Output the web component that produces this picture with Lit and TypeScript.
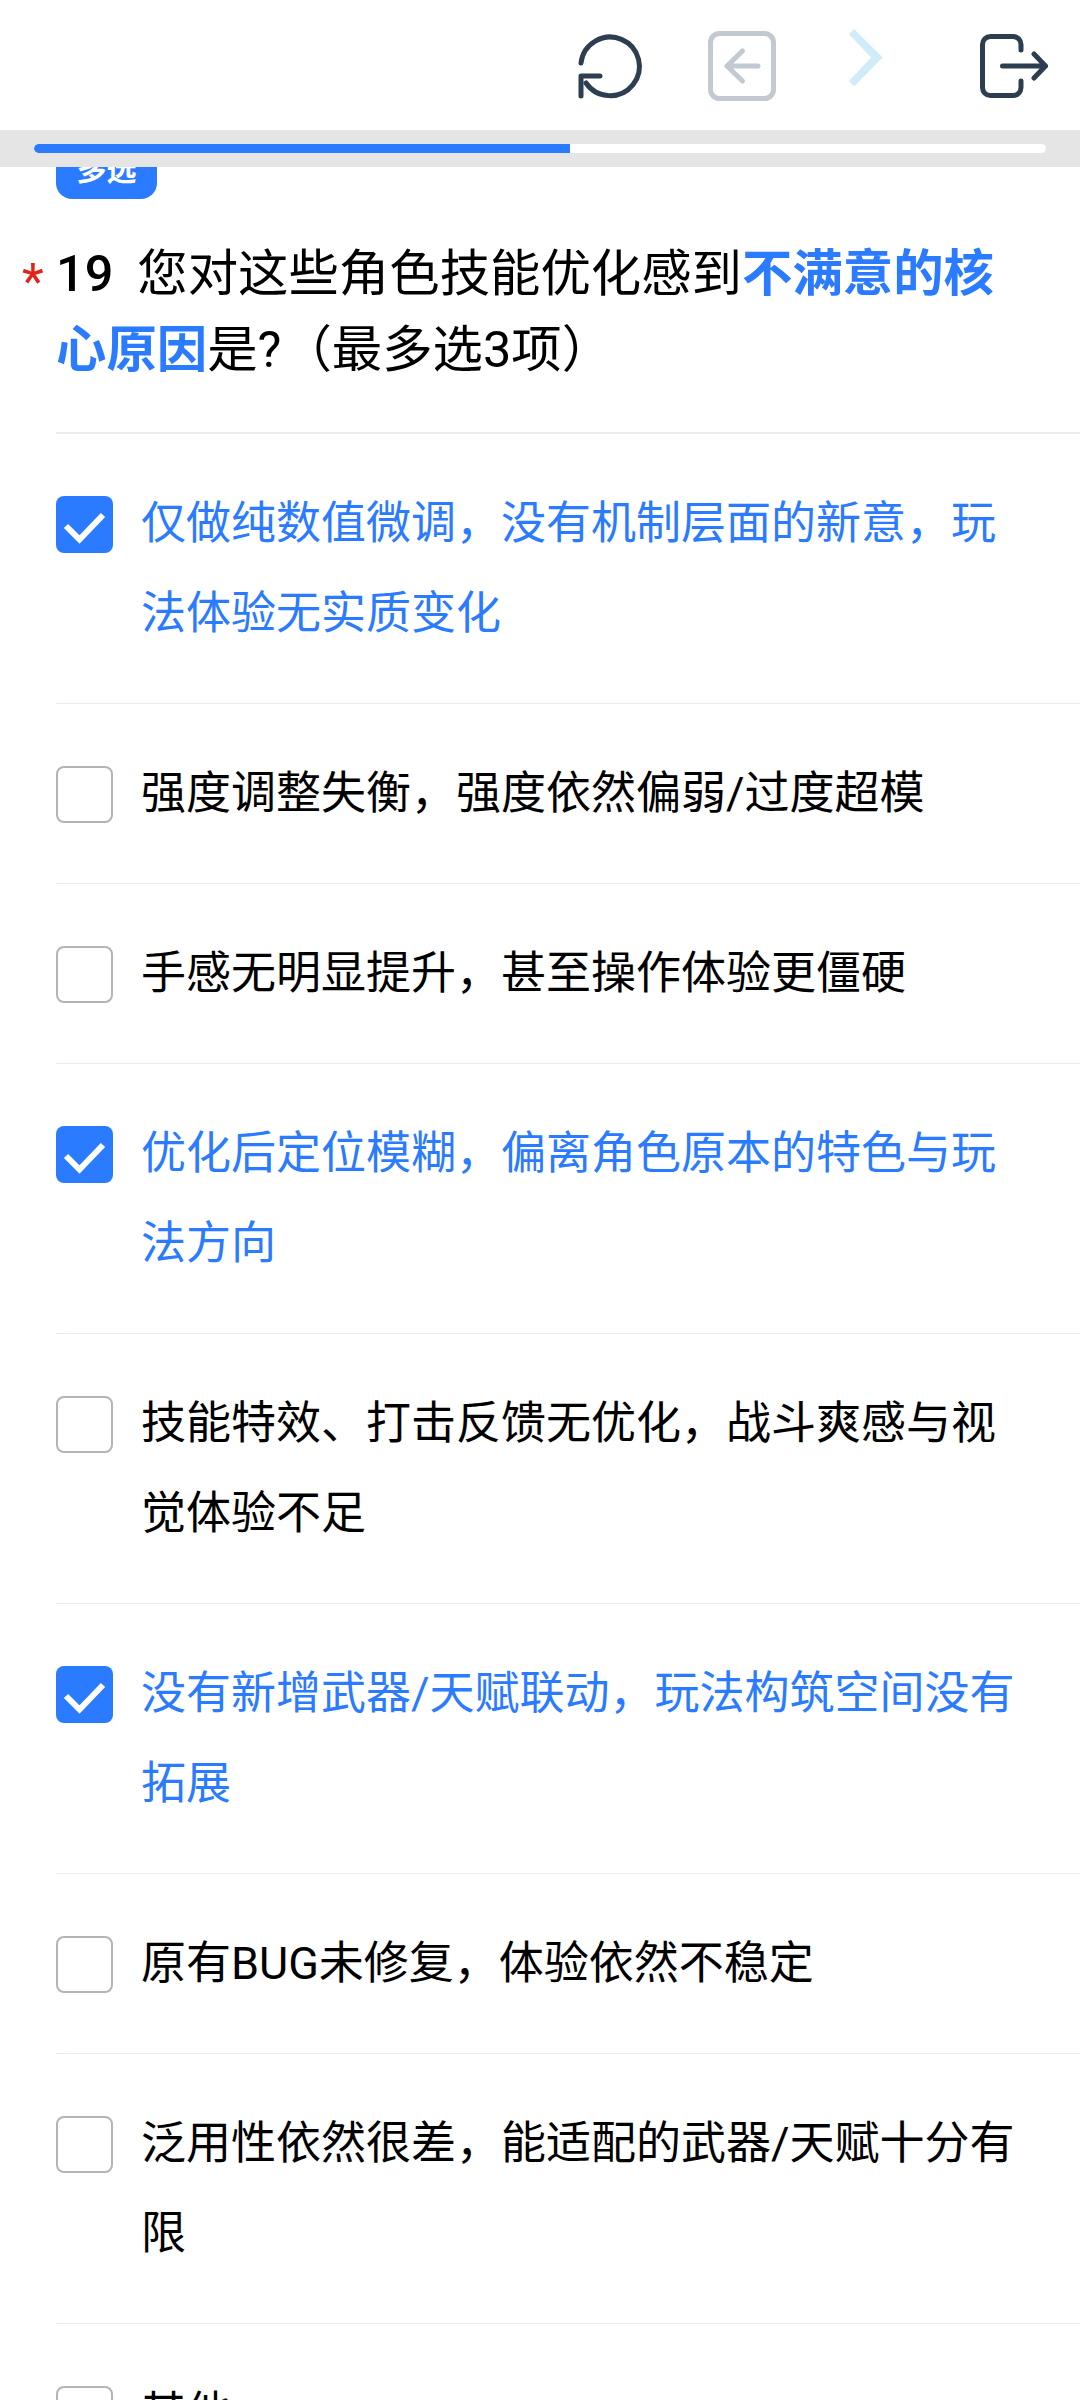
import { LitElement, html, css } from "lit";
import { customElement } from "lit/decorators.js";

type Option = { text: string; checked?: boolean };

const OPTIONS: Option[] = [
  { text: "仅做纯数值微调，没有机制层面的新意，玩法体验无实质变化", checked: true },
  { text: "强度调整失衡，强度依然偏弱/过度超模" },
  { text: "手感无明显提升，甚至操作体验更僵硬" },
  { text: "优化后定位模糊，偏离角色原本的特色与玩法方向", checked: true },
  { text: "技能特效、打击反馈无优化，战斗爽感与视觉体验不足" },
  { text: "没有新增武器/天赋联动，玩法构筑空间没有拓展", checked: true },
  { text: "原有BUG未修复，体验依然不稳定" },
  { text: "泛用性依然很差，能适配的武器/天赋十分有限" },
  { text: "其他" },
];

@customElement("app-root")
export class AppRoot extends LitElement {
  static styles = css`
    :host {
      display: block;
      width: 1080px;
      height: 2400px;
      overflow: hidden;
      background: #fff;
      color: #000;
      font-family: Roboto, "Noto Sans CJK SC", sans-serif;
    }
    .head {
      position: relative;
      z-index: 2;
      background: #fff;
    }
    .tools {
      height: 130px;
      display: flex;
      align-items: center;
      padding-top: 2px;
      box-sizing: border-box;
    }
    .tools svg {
      display: block;
      height: 80px;
      flex: none;
      fill: none;
      stroke-linecap: round;
      stroke-linejoin: round;
    }
    .refresh {
      width: 70px;
      margin-left: 575px;
      stroke: #2c3e50;
      stroke-width: 5;
    }
    .back {
      width: 78px;
      margin-left: 58px;
      stroke: #c3c9d0;
      stroke-width: 5;
    }
    .next {
      width: 44px;
      margin-left: 63px;
    }
    .next polygon {
      fill: #cfecf8;
    }
    .exit {
      width: 80px;
      margin-left: 87px;
      stroke: #2c3e50;
      stroke-width: 5;
    }
    .band {
      height: 37px;
      background: #e5e5e5;
      padding: 14px 34px 14px 34px;
      box-sizing: border-box;
    }
    .track {
      height: 9px;
      background: #fff;
      border-radius: 5px;
      overflow: hidden;
    }
    .fill {
      height: 100%;
      background: #2a7bff;
      border-radius: 5px 0 0 5px;
    }
    .survey {
      margin-top: -26px;
      padding-left: 56px;
    }
    .tag {
      width: 101px;
      height: 58px;
      background: #2a7bff;
      color: #fff;
      border-radius: 16px;
      font-size: 30px;
      font-weight: 700;
      line-height: 58px;
      text-align: center;
    }
    .title {
      position: relative;
      margin: 37px 0 0;
      padding: 0 44px 44px 0;
      font-size: 50.4px;
      line-height: 76px;
      font-weight: 400;
      border-bottom: 2px solid #ececec;
    }
    .star {
      position: absolute;
      left: -34px;
      top: 8px;
      color: #e3231a;
    }
    .num {
      font-weight: 500;
      margin-right: 24px;
    }
    .title b {
      color: #2a7bff;
      font-weight: 700;
    }
    .opt {
      display: flex;
      gap: 28px;
      padding: 44px 50px 44px 0;
      border-bottom: 1px solid #e3eff5;
      font-size: 45px;
      line-height: 90px;
    }
    .box {
      flex: none;
      width: 57px;
      height: 57px;
      margin-top: 18px;
      box-sizing: border-box;
      border: 2px solid #b4b4b4;
      border-radius: 8px;
    }
    .on .box {
      background: #2a7bff;
      border: none;
    }
    .box svg {
      display: block;
      width: 57px;
      height: 57px;
      fill: none;
      stroke: #fff;
      stroke-width: 6;
    }
    .label {
      margin-top: 1px;
    }
    .on .label {
      color: #2a7bff;
    }
  `;

  render() {
    return html`
      <div class="head">
        <div class="tools">
          <svg class="refresh" viewBox="0 0 70 80">
            <path d="M6 37A29.3 29.3 0 1 1 11 57" />
            <path d="M25 50H6V70" />
          </svg>
          <svg class="back" viewBox="0 0 78 80">
            <rect x="7.5" y="7.5" width="63" height="65" rx="9" />
            <path d="M55 40H24M39.5 25 24 40l15.5 15" />
          </svg>
          <svg class="next" viewBox="0 0 44 80">
            <polygon points="10,3 38.6,31.6 10,60.5 5,55 27,31.6 5,8" />
          </svg>
          <svg class="exit" viewBox="0 0 80 80">
            <path d="M46 24V18.500A8 8 0 0 0 38 10.500H15.500A8 8 0 0 0 7.500 18.500V61.500A8 8 0 0 0 15.500 69.500H38A8 8 0 0 0 46 61.500V55" />
            <path d="M27.500 40H70.500M59 28 70.500 40 59 52" />
          </svg>
        </div>
        <div class="band">
          <div class="track"><div class="fill" style="width: ${(536 / 1012) * 100}%"></div></div>
        </div>
      </div>
      <div class="survey">
        <div class="tag">多选</div>
        <h1 class="title">
          <span class="star">*</span><span class="num">19</span>您对这些角色技能优化感到<b>不满意的核心原因</b>是?（最多选3项）
        </h1>
        ${OPTIONS.map(
          (o) => html`
            <div class="opt ${o.checked ? "on" : ""}">
              <div class="box">
                ${o.checked
                  ? html`<svg viewBox="0 0 57 57"><path d="M10 30 23.500 43.500 47 19" /></svg>`
                  : ""}
              </div>
              <div class="label">${o.text}</div>
            </div>
          `
        )}
      </div>
    `;
  }
}
